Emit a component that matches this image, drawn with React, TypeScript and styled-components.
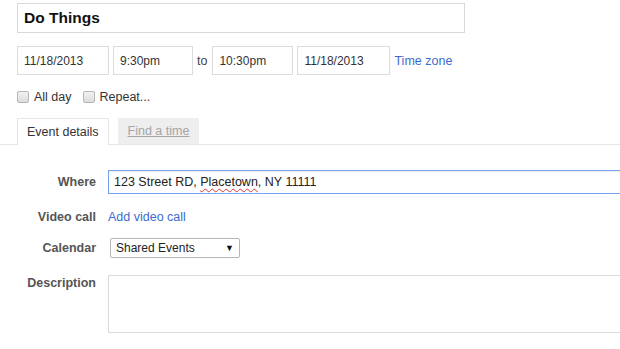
import styled, { createGlobalStyle } from 'styled-components';

const GlobalStyle = createGlobalStyle`
  html, body {
    margin: 0;
    background: #fff;
  }
  body {
    font-family: 'Liberation Sans', Arial, sans-serif;
    font-size: 12.5px;
    color: #222;
    overflow: hidden;
  }
`;

const Page = styled.div`
  width: 620px;
  height: 349px;
  overflow: hidden;
`;

const Top = styled.div`
  padding: 3px 0 0 17px;
`;

const TitleBox = styled.div`
  box-sizing: border-box;
  width: 448px;
  height: 30px;
  border: 1px solid #d9d9d9;
  padding: 0 6px;
  display: flex;
  align-items: center;
  font-size: 15.5px;
  font-weight: bold;
  color: #111;
`;

const DateRow = styled.div`
  display: flex;
  align-items: center;
  gap: 4px;
  margin-top: 13px;
  height: 29px;
`;

const Field = styled.div<{ w: number }>`
  box-sizing: border-box;
  width: ${(p) => p.w}px;
  height: 29px;
  border: 1px solid #dcdcdc;
  padding: 0 6px;
  display: flex;
  align-items: center;
  font-size: 12px;
  color: #333;
`;

const To = styled.span`
  color: #444;
  margin-right: 1px;
`;

const Link = styled.span`
  color: #3b6ccf;
  cursor: pointer;
`;

const CheckRow = styled.div`
  display: flex;
  align-items: center;
  margin-top: 16px;
  height: 12px;
  color: #333;
`;

const Check = styled.span`
  box-sizing: border-box;
  width: 12px;
  height: 12px;
  border: 1px solid #b5b5b5;
  border-radius: 2px;
  background: linear-gradient(#f1f1f1, #dcdcdc);
  margin-right: 5px;
`;

const CheckLabel = styled.span`
  margin-right: 11px;
`;

const TabBar = styled.div`
  display: flex;
  align-items: flex-end;
  gap: 9px;
  margin-top: 15px;
  padding-left: 17px;
  border-bottom: 1px solid #e5e5e5;
  height: 26px;
`;

const Tab = styled.div<{ active?: boolean }>`
  box-sizing: border-box;
  height: ${(p) => (p.active ? '27px' : '26px')};
  margin-bottom: ${(p) => (p.active ? '-1px' : '0')};
  padding: 0 9px;
  display: flex;
  align-items: center;
  background: ${(p) => (p.active ? '#fff' : '#eeeeee')};
  border: 1px solid ${(p) => (p.active ? '#e5e5e5' : '#eeeeee')};
  border-bottom: ${(p) => (p.active ? 'none' : '1px solid #eeeeee')};
  color: ${(p) => (p.active ? '#333' : '#a5a5a5')};
  text-decoration: ${(p) => (p.active ? 'none' : 'underline')};
`;

const Form = styled.div`
  display: flex;
  flex-direction: column;
  margin-top: 25px;
`;

const Row = styled.div<{ h: number; mb: number; top?: boolean }>`
  display: flex;
  align-items: ${(p) => (p.top ? 'flex-start' : 'center')};
  gap: 12px;
  height: ${(p) => p.h}px;
  margin-bottom: ${(p) => p.mb}px;
`;

const Label = styled.div<{ top?: boolean }>`
  flex: 0 0 96px;
  font-weight: bold;
  color: #555;
  text-align: right;
  padding-top: ${(p) => (p.top ? '1px' : '0')};
`;

const WhereInput = styled.div`
  box-sizing: border-box;
  flex: 1;
  height: 24px;
  border: 1px solid #76a3f0;
  border-right: none;
  box-shadow: inset 0 1px 2px rgba(0, 0, 0, 0.08);
  padding: 0 5px;
  display: flex;
  align-items: center;
  color: #222;
`;

const Squiggle = styled.span`
  text-decoration: underline wavy #d33;
  text-decoration-thickness: 1px;
  text-underline-offset: 2px;
`;

const Select = styled.div`
  box-sizing: border-box;
  width: 130px;
  height: 20px;
  margin-left: 2px;
  border: 1px solid #b5b5b5;
  border-radius: 2px;
  padding: 0 5px;
  display: flex;
  align-items: center;
  justify-content: space-between;
  font-size: 12px;
  color: #222;
`;

const Arrow = styled.span`
  font-size: 9px;
  color: #111;
`;

const TextArea = styled.div`
  box-sizing: border-box;
  flex: 1;
  height: 58px;
  border: 1px solid #dcdcdc;
  border-right: none;
`;

export default function App() {
  return (
    <Page>
      <GlobalStyle />
      <Top>
        <TitleBox>Do Things</TitleBox>
        <DateRow>
          <Field w={92}>11/18/2013</Field>
          <Field w={80}>9:30pm</Field>
          <To>to</To>
          <Field w={81}>10:30pm</Field>
          <Field w={93}>11/18/2013</Field>
          <Link>Time zone</Link>
        </DateRow>
        <CheckRow>
          <Check />
          <CheckLabel>All day</CheckLabel>
          <Check />
          <CheckLabel>Repeat...</CheckLabel>
        </CheckRow>
      </Top>
      <TabBar>
        <Tab active>Event details</Tab>
        <Tab>Find a time</Tab>
      </TabBar>
      <Form>
        <Row h={24} mb={11}>
          <Label>Where</Label>
          <WhereInput>
            123 Street RD,&nbsp;<Squiggle>Placetown</Squiggle>, NY 11111
          </WhereInput>
        </Row>
        <Row h={24} mb={9}>
          <Label>Video call</Label>
          <Link>Add video call</Link>
        </Row>
        <Row h={20} mb={17}>
          <Label>Calendar</Label>
          <Select>
            Shared Events
            <Arrow>▼</Arrow>
          </Select>
        </Row>
        <Row h={58} mb={0} top>
          <Label top>Description</Label>
          <TextArea />
        </Row>
      </Form>
    </Page>
  );
}
